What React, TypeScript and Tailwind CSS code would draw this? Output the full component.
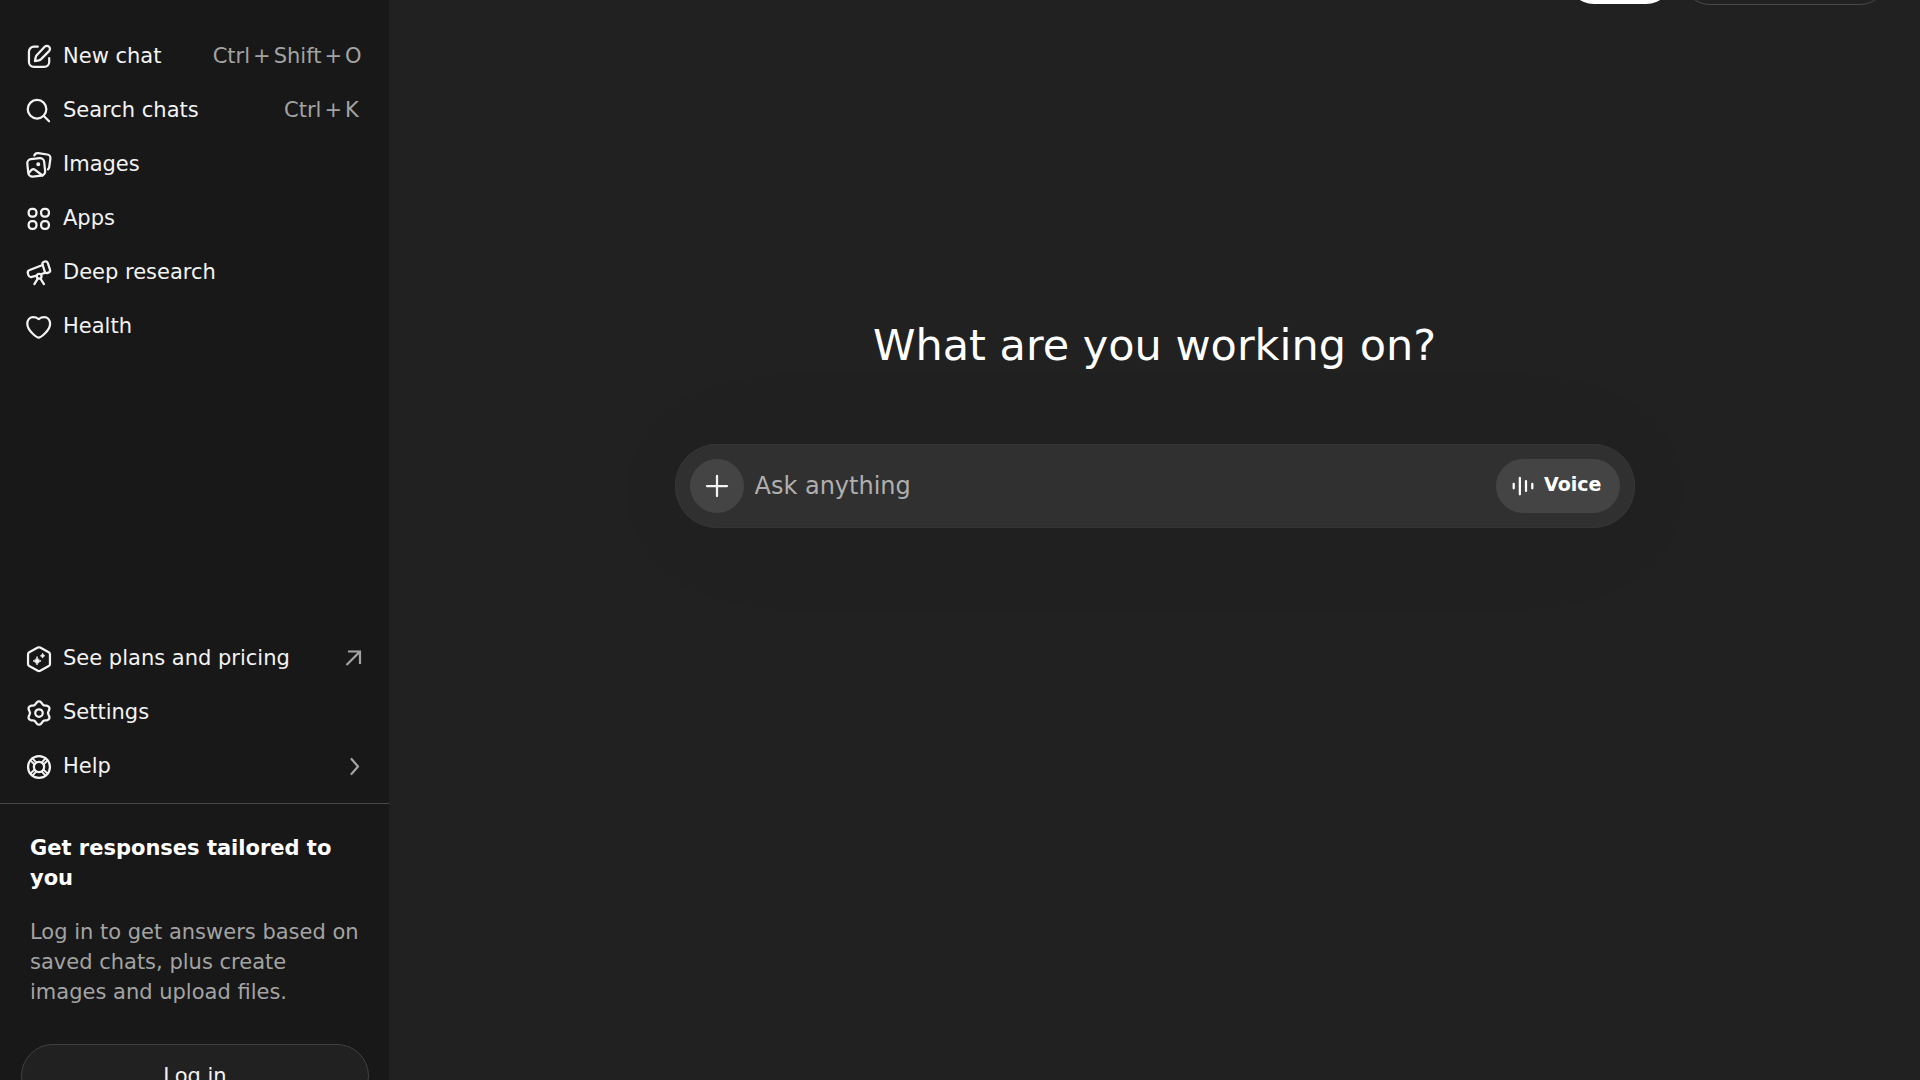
import React from 'react';

type IconProps = { children: React.ReactNode; className?: string };

const Icon = ({ children, className = '' }: IconProps) => (
    <svg
        viewBox="0 0 20 20"
        fill="none"
        stroke="currentColor"
        strokeWidth="1.5"
        strokeLinecap="round"
        strokeLinejoin="round"
        aria-hidden="true"
        className={`w-[30px] h-[30px] shrink-0 ${className}`}
    >
        {children}
    </svg>
);

// Six-lobed outline of the settings gear
const gearPath =
    Array.from({ length: 72 }, (_, i) => {
        const a = (i * 5 * Math.PI) / 180;
        const r = 6.9 + 0.9 * Math.cos(6 * a);
        const x = 10 + r * Math.sin(a);
        const y = 10 - r * Math.cos(a);
        return `${i === 0 ? 'M' : 'L'}${x.toFixed(2)} ${y.toFixed(2)}`;
    }).join('') + 'Z';

const icons = {
    compose: (
        <Icon>
            <path d="M9.2 3.1H6.6A3.3 3.3 0 0 0 3.3 6.400v6.900a3.300 3.300 0 0 0 3.300 3.300h6.900a3.300 3.300 0 0 0 3.300-3.300v-2.500" />
            <path d="M13.800 3.200a2 2 0 0 1 2.900 2.900l-5.300 5.300a3.300 3.300 0 0 1-1.500.8l-2.600.5.5-2.600a3.300 3.300 0 0 1 .8-1.500z" />
        </Icon>
    ),
    search: (
        <Icon>
            <circle cx="8.7" cy="8.8" r="6.2" />
            <path d="m13.2 13.3 3.5 3.5" />
        </Icon>
    ),
    images: (
        <Icon>
            <rect x="2.500" y="5.700" width="11.300" height="11.700" rx="2.800" transform="rotate(-6 8.200 11.600)" />
            <path d="M6.900 3.600c.4-1.100 1.400-1.700 2.600-1.500l6 .9c1.400.2 2.300 1.400 2.100 2.800l-.8 5.600c-.1.700-.4 1.100-.8 1.500" />
            <path d="m3.200 15.300 1.700-1.900c.8-.8 1.700-.9 2.500-.2l4.900 3.800" />
            <circle cx="9.500" cy="9.500" r=".6" fill="currentColor" />
        </Icon>
    ),
    apps: (
        <Icon>
            <rect x="3.1" y="3.2" width="5.2" height="5.2" rx="2.2" />
            <rect x="11.4" y="3.2" width="5.2" height="5.2" rx="2.2" />
            <rect x="3.1" y="11.4" width="5.2" height="5.2" rx="2.2" />
            <rect x="11.4" y="11.4" width="5.2" height="5.2" rx="2.2" />
        </Icon>
    ),
    telescope: (
        <Icon>
            <rect x="13" y="2.2" width="3.7" height="7.8" rx="1.6" transform="rotate(-18 14.9 6.1)" />
            <path d="M12.4 4.7 3.8 8a1.9 1.9 0 0 0-1.2 2.3l.3 1a1.9 1.9 0 0 0 2.3 1.3l3.3-.8M14 9.9l-2.4.8" />
            <circle cx="10.1" cy="12.1" r="1.6" />
            <path d="m9.2 13.7-2.3 3.700M11 13.7l2.3 3.700" />
        </Icon>
    ),
    heart: (
        <Icon>
            <path d="M9.800 17.100c-.8 0-7.6-4.3-7.600-9.200 0-2.600 1.700-4.500 4-4.500 1.200 0 2.400.4 3.200 1.100q.4.3.8 0c.8-.7 2-1.100 3.200-1.100 2.300 0 4 1.900 4 4.500 0 4.900-6.800 9.200-7.600 9.200z" />
        </Icon>
    ),
    plans: (
        <Icon>
            <path d="M9.2 2.4a1.7 1.7 0 0 1 1.6 0l5.7 3.1a1.6 1.6 0 0 1 .8 1.4v6.4a1.6 1.6 0 0 1-.8 1.4l-5.7 3.1a1.7 1.7 0 0 1-1.6 0l-5.7-3.1a1.6 1.6 0 0 1-.8-1.4V6.900a1.600 1.600 0 0 1 .8-1.400z" />
            <path
                d="M8.700 8.600q.5 2.200 2.700 2.700-2.200.5-2.700 2.700-.5-2.200-2.700-2.700 2.200-.5 2.700-2.700zM12.400 6.400q.3 1.200 1.500 1.500-1.200.3-1.500 1.500-.3-1.200-1.500-1.500 1.200-.3 1.500-1.500z"
                fill="currentColor"
                strokeWidth=".5"
            />
        </Icon>
    ),
    settings: (
        <Icon>
            <path d={gearPath} />
            <circle cx="10" cy="10" r="2.500" />
        </Icon>
    ),
    help: (
        <Icon>
            <circle cx="10" cy="10" r="7.300" />
            <circle cx="10" cy="10" r="3.400" />
            <path d="m4.200 5.600 2.900 2.700M5.600 4.200l2.700 2.900M15.800 5.600l-2.900 2.700M14.400 4.200l-2.700 2.900M4.200 14.400l2.900-2.700M5.600 15.800l2.700-2.900M15.800 14.400l-2.900-2.700M14.400 15.800l-2.700-2.900" strokeWidth="1.300" />
        </Icon>
    ),
};

const Shortcut = ({ keys }: { keys: string[] }) => (
    <span className="ml-auto flex gap-[3px] text-[#a3a3a3]">
        {keys.map((key, i) => (
            <React.Fragment key={key}>
                {i > 0 && <span>+</span>}
                <kbd className="min-w-[17px] font-[inherit]">{key}</kbd>
            </React.Fragment>
        ))}
    </span>
);

type RowProps = { icon: React.ReactNode; label: string; trailing?: React.ReactNode };

const SidebarRow = ({ icon, label, trailing }: RowProps) => (
    <li>
        <a href="#" className="flex h-[54px] items-center gap-[9px] rounded-2xl pl-[15px] pr-[18px] hover:bg-white/10">
            {icon}
            <span className="flex flex-1 pb-[2px] leading-[30px]">
                <span className="whitespace-nowrap">{label}</span>
                {trailing}
            </span>
        </a>
    </li>
);

const Sidebar = () => (
    <aside className="flex w-[389px] shrink-0 flex-col bg-[#181818] text-[21px] text-[#f3f3f3]">
        <nav aria-label="Main" className="px-[9px] pt-[30px]">
            <ul>
                <SidebarRow icon={icons.compose} label="New chat" trailing={<Shortcut keys={['Ctrl', 'Shift', 'O']} />} />
                <SidebarRow icon={icons.search} label="Search chats" trailing={<Shortcut keys={['Ctrl', 'K']} />} />
                <SidebarRow icon={icons.images} label="Images" />
                <SidebarRow icon={icons.apps} label="Apps" />
                <SidebarRow icon={icons.telescope} label="Deep research" />
                <SidebarRow icon={icons.heart} label="Health" />
            </ul>
        </nav>

        {/* The footer runs past the bottom edge of the window */}
        <div className="-mb-12 mt-auto">
            <ul className="px-[9px] pb-[9px]">
                <SidebarRow
                    icon={icons.plans}
                    label="See plans and pricing"
                    trailing={
                        <svg viewBox="0 0 24 24" fill="none" stroke="#a3a3a3" strokeWidth="2.2" aria-hidden="true" className="ml-auto mt-[3px] h-6 w-6">
                            <path d="M10 5.500h12V18M22 5.500 8.500 19" />
                        </svg>
                    }
                />
                <SidebarRow icon={icons.settings} label="Settings" />
                <SidebarRow
                    icon={icons.help}
                    label="Help"
                    trailing={
                        <svg viewBox="0 0 24 24" fill="none" stroke="#a3a3a3" strokeWidth="2.2" strokeLinecap="round" strokeLinejoin="round" aria-hidden="true" className="ml-auto mt-[3px] h-6 w-6">
                            <path d="m13.500 5 6.500 7.500-6.500 7.500" />
                        </svg>
                    }
                />
            </ul>
            <div className="border-t border-[#484848] pb-5 pl-[21px] pr-5 pt-[29px] leading-[30px]">
                <div className="px-[9px]">
                    <h2 className="font-bold text-white">Get responses tailored to you</h2>
                    <p className="mt-6 text-[#a3a3a3]">
                        Log in to get answers based on saved chats, plus create images and upload files.
                    </p>
                </div>
                <button type="button" className="mt-[37px] h-16 w-full rounded-full border border-[#414141] bg-[#212121] hover:bg-[#2f2f2f]">
                    Log in
                </button>
            </div>
        </div>
    </aside>
);

const Composer = () => (
    <form
        onSubmit={(e) => e.preventDefault()}
        className="flex h-[84px] w-full max-w-[960px] items-center rounded-full bg-[#303030] px-[15px] shadow-[0_6px_120px_2px_#0000000a,inset_0_0_1px_#ffffff33]"
    >
        <button type="button" aria-label="Add files and more" className="flex h-[54px] w-[54px] shrink-0 items-center justify-center rounded-full bg-[#444444] text-[#f3f3f3]">
            <Icon>
                <path d="M10 3.300v13.400M3.300 10h13.400" />
            </Icon>
        </button>
        <input
            type="text"
            aria-label="Ask anything"
            placeholder="Ask anything"
            className="min-w-0 flex-1 bg-transparent px-[11px] text-2xl text-white outline-none placeholder:text-[#afafaf]"
        />
        <button type="button" className="flex h-[54px] shrink-0 items-center gap-[6px] rounded-full bg-[#444444] pl-3 pr-[18px] text-[19px] font-bold text-white">
            <Icon>
                <path d="M3.800 8.500v3M7.900 4.500v11M12 6.700v6.600M16.200 8.500v3" />
            </Icon>
            <span className="pb-[3px]">Voice</span>
        </button>
    </form>
);

export default function App() {
    return (
        <div className="flex h-screen overflow-hidden bg-[#212121] font-['DejaVu_Sans',sans-serif]">
            <Sidebar />
            <main className="flex min-w-0 flex-1 flex-col">
                {/* Scrolled mostly out of view */}
                <header className="-mt-[62px] flex h-[78px] shrink-0 items-center justify-end gap-[9px] pr-8">
                    <button type="button" aria-label="Log in" className="h-[54px] w-[106px] rounded-full bg-white" />
                    <button type="button" aria-label="Sign up for free" className="h-14 w-[206px] rounded-full border border-[#484848]" />
                </header>
                <section className="flex flex-col items-center px-6 pt-[304px]">
                    <h1 className="text-[43px] leading-[50px] text-white">What are you working on?</h1>
                    <div className="mt-[74px] flex w-full justify-center">
                        <Composer />
                    </div>
                </section>
            </main>
        </div>
    );
}
